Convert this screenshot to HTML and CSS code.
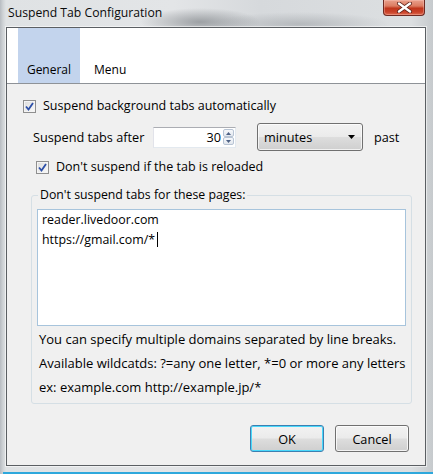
FILE: index.html
```html
<!DOCTYPE html>
<html>
<head>
<meta charset="utf-8">
<title>Suspend Tab Configuration</title>
<link rel="stylesheet" href="styles.css">
</head>
<body>
<div class="window">
  <div class="titlebar">
    <span class="title">Suspend Tab Configuration</span>
    <div class="close">
      <svg width="17" height="11" viewBox="0 0 17 11">
        <path d="M3 1.5 L14 9.5 M14 1.5 L3 9.5" stroke="#5a1e16" stroke-width="4" stroke-linecap="round"/>
        <path d="M3 1.5 L14 9.5 M14 1.5 L3 9.5" stroke="#ffffff" stroke-width="2.4" stroke-linecap="round"/>
      </svg>
    </div>
  </div>

  <div class="client">
    <div class="tabs">
      <div class="tab tab-selected">General</div>
      <div class="tab">Menu</div>
    </div>

    <div class="panel">
      <label class="check check-main">
        <span class="box"><svg width="9" height="9" viewBox="0 0 9 9"><path d="M1 4.5 L3.5 7.5 L8 1" fill="none" stroke="#2c4fa8" stroke-width="1.8"/></svg></span>
        <span>Suspend background tabs automatically</span>
      </label>

      <div class="after-row">
        <span class="after-label">Suspend tabs after</span>
        <div class="spinbox">
          <span class="spin-value">30</span>
          <div class="spin-buttons">
            <span class="spin-btn"><svg width="5" height="3" viewBox="0 0 5 3"><path d="M0 3 L2.5 0 L5 3Z" fill="#4d6185"/></svg></span>
            <span class="spin-btn"><svg width="5" height="3" viewBox="0 0 5 3"><path d="M0 0 L2.5 3 L5 0Z" fill="#4d6185"/></svg></span>
          </div>
        </div>
        <div class="combo">
          <span>minutes</span>
          <svg width="7" height="4" viewBox="0 0 7 4"><path d="M0 0 L7 0 L3.5 4Z" fill="#000"/></svg>
        </div>
        <span class="past">past</span>
      </div>

      <label class="check check-sub">
        <span class="box"><svg width="9" height="9" viewBox="0 0 9 9"><path d="M1 4.5 L3.5 7.5 L8 1" fill="none" stroke="#2c4fa8" stroke-width="1.8"/></svg></span>
        <span>Don't suspend if the tab is reloaded</span>
      </label>

      <fieldset class="group">
        <legend>Don't suspend tabs for these pages:</legend>
        <div class="pages">
          <div>reader.livedoor.com</div>
          <div>https://gmail.com/*<span class="caret"></span></div>
        </div>
        <p class="help">You can specify multiple domains separated by line breaks.</p>
        <p class="help">Available wildcatds: ?=any one letter, *=0 or more any letters</p>
        <p class="help">ex: example.com http://example.jp/*</p>
      </fieldset>

      <div class="buttons">
        <button class="btn btn-default">OK</button>
        <button class="btn">Cancel</button>
      </div>
    </div>
  </div>
  <div class="bottom-frame"></div>
</div>
</body>
</html>
```

FILE: styles.css
```css
html, body {
  margin: 0;
  padding: 0;
  overflow: hidden;
}

body {
  font-family: "Open Sans", "Noto Sans", sans-serif;
  font-size: 12px;
  color: #000;
}

.window {
  width: 433px;
  height: 474px;
  display: flex;
  flex-direction: column;
  background:
    radial-gradient(ellipse 60px 14px at 200px 22px, rgba(90, 95, 100, 0.5), rgba(90, 95, 100, 0) 100%),
    radial-gradient(ellipse 90px 12px at 300px 24px, rgba(120, 125, 130, 0.35), rgba(120, 125, 130, 0) 100%),
    linear-gradient(90deg, #b7bcc1 0px, #cfd3d6 3px, #dfe2e4 6px, #e3e5e7 40%, #d6d9dc 60%, #dcdfe1 95%, #c6cacd 100%);
}

/* title bar */
.titlebar {
  height: 27px;
  display: flex;
  align-items: flex-start;
  padding-left: 8px;
  flex: none;
}

.title {
  line-height: 26px;
  font-size: 12.2px;
  color: #0a0a0a;
}

.close {
  margin-left: auto;
  margin-right: 8px;
  width: 42px;
  height: 16px;
  box-sizing: border-box;
  border: 1px solid #6e2a22;
  border-top: none;
  border-radius: 0 0 4px 4px;
  background: linear-gradient(180deg, #e9a08c 0%, #dc7c62 40%, #c0361c 55%, #c9422a 80%, #de6c50 100%);
  box-shadow: inset 0 0 0 1px rgba(255, 210, 200, 0.35);
  display: flex;
  align-items: center;
  justify-content: center;
}

/* client area */
.client {
  margin: 0 7px 0 6px;
  height: 437px;
  border: 1px solid #5b5f63;
  box-shadow: 0 0 0 1px rgba(255, 255, 255, 0.55);
  background: #f0f0f0;
  display: flex;
  flex-direction: column;
  flex: none;
}

.bottom-frame {
  flex: 1;
  border-bottom: 2px solid #2ea8dc;
  margin-left: 3px;
}

/* tabs */
.tabs {
  height: 55px;
  background: #fff;
  border-bottom: 1px solid #8e9297;
  display: flex;
  padding-left: 11px;
  flex: none;
}

.tab {
  display: flex;
  align-items: flex-end;
  padding: 0 14px 5px;
  line-height: 16px;
}

.tab-selected {
  width: 62px;
  box-sizing: border-box;
  padding: 0 0 5px;
  justify-content: center;
  background: #c3d4ed;
}

/* general panel */
.panel {
  display: flex;
  flex-direction: column;
  padding: 12px 0 0;
  flex: 1;
  font-size: 12.7px;
}

.check {
  display: flex;
  align-items: center;
  gap: 7px;
  height: 20px;
  line-height: 20px;
  font-size: 12.5px;
}

.check-main {
  margin-left: 16px;
}

.check-sub {
  margin-left: 29px;
  margin-top: 6px;
}

.box {
  width: 13px;
  height: 13px;
  box-sizing: border-box;
  border: 1px solid #8f8f8f;
  background: linear-gradient(135deg, #dcdcdc, #fafafa);
  box-shadow: inset 0 0 0 1px #f4f4f4;
  display: flex;
  align-items: center;
  justify-content: center;
  flex: none;
}

.after-row {
  display: flex;
  align-items: center;
  margin: 7px 0 0 26px;
  height: 28px;
}

.after-label {
  width: 120px;
}

.spinbox {
  width: 83px;
  height: 21px;
  box-sizing: border-box;
  border: 1px solid #abadb3;
  border-color: #abadb3 #e3e9ef #e3e9ef #e2e3ea;
  background: #fff;
  display: flex;
  align-items: center;
  justify-content: flex-end;
}

.spin-value {
  padding-right: 2px;
}

.spin-buttons {
  display: flex;
  flex-direction: column;
  gap: 0;
  margin-right: 1px;
}

.spin-btn {
  width: 11px;
  height: 8px;
  box-sizing: border-box;
  border: 1px solid #b8c4d4;
  border-radius: 2px;
  background: linear-gradient(180deg, #f6f8fb, #e2e7ee);
  display: flex;
  align-items: center;
  justify-content: center;
}

.combo {
  margin-left: 21px;
  width: 106px;
  height: 28px;
  box-sizing: border-box;
  border: 1px solid #707070;
  border-radius: 3px;
  background: linear-gradient(180deg, #f2f2f2 0%, #ebebeb 48%, #dddddd 52%, #cfcfcf 100%);
  box-shadow: inset 0 0 0 1px rgba(255, 255, 255, 0.7);
  display: flex;
  align-items: center;
  justify-content: space-between;
  padding: 0 7px 0 6px;
}

.past {
  margin-left: 11px;
}

/* excluded pages group */
.group {
  margin: 10px 0 0 24px;
  width: 381px;
  box-sizing: border-box;
  border: 1px solid #d5dfe5;
  border-radius: 3px;
  padding: 6px 5px 4px 5px;
  min-width: 0;
}

.group legend {
  padding: 0 2px;
  margin-left: 1px;
  line-height: 16px;
  font-size: 12.3px;
}

.pages {
  height: 117px;
  box-sizing: border-box;
  border: 1px solid #a7c4dc;
  background: #fff;
  padding: 0 4px;
  line-height: 20px;
  font-size: 12.4px;
}

.caret {
  display: inline-block;
  width: 1px;
  height: 15px;
  background: #000;
  vertical-align: -3px;
  margin-left: 2px;
}

.help {
  margin: 0;
  padding-left: 2px;
  line-height: 24px;
  font-size: 13px;
  white-space: nowrap;
}

.help:first-of-type {
  margin-top: 1px;
}

/* dialog buttons */
.buttons {
  display: flex;
  justify-content: flex-end;
  gap: 11px;
  margin: 21px 16px 0 0;
}

.btn {
  font-family: inherit;
  font-size: 12.7px;
  width: 74px;
  height: 27px;
  box-sizing: border-box;
  border: 1px solid #707070;
  border-radius: 3px;
  background: linear-gradient(180deg, #f2f2f2 0%, #ebebeb 48%, #dddddd 52%, #cfcfcf 100%);
  box-shadow: inset 0 0 0 1px rgba(255, 255, 255, 0.75);
  padding: 0;
  color: #000;
}

.btn-default {
  border-color: #3c7fb1;
  box-shadow: inset 0 0 0 1px #48d8fb;
}
```
